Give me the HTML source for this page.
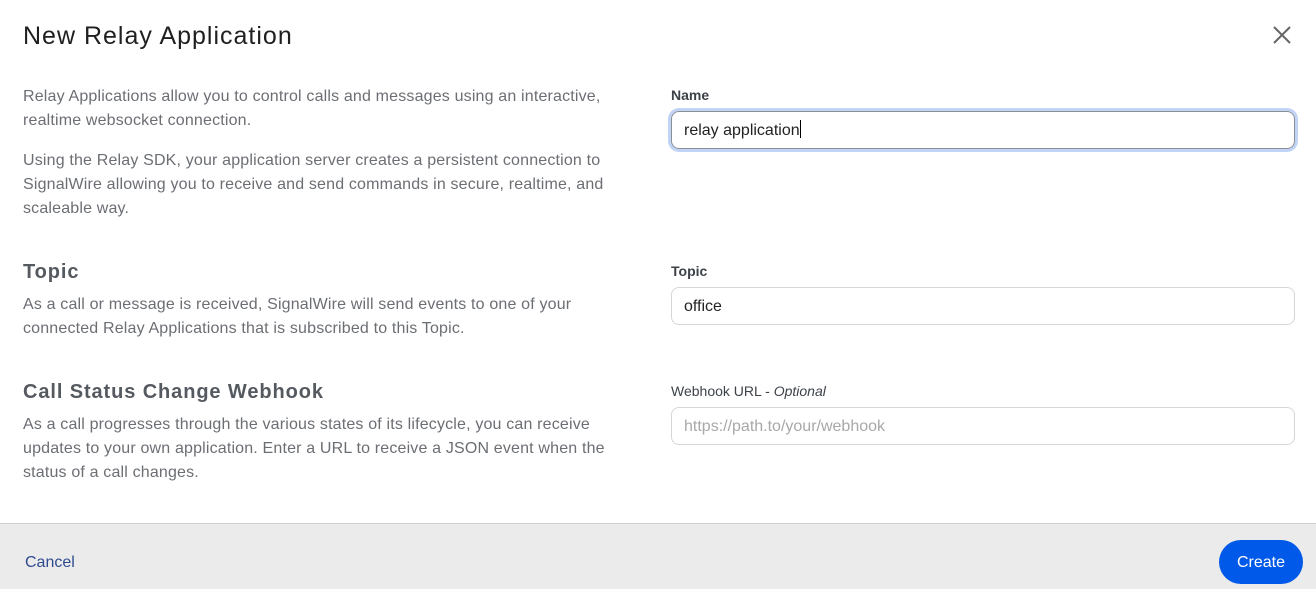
<!DOCTYPE html>
<html><head><meta charset="utf-8"><style>
*{margin:0;padding:0;box-sizing:border-box}
body{width:1316px;height:589px;background:#fff;font-family:"Liberation Sans",sans-serif;position:relative;overflow:hidden;color:#666}
.a{position:absolute}
.p{font-size:16px;line-height:24px;color:#6b6e73;letter-spacing:0.17px}
h1{position:absolute;left:23px;top:22px;font-size:25px;font-weight:400;color:#1f1f1f;letter-spacing:1px}
h2{position:absolute;left:23px;font-size:20px;font-weight:700;color:#555a60;letter-spacing:0.9px}
.lab{position:absolute;left:671px;font-size:14px;color:#3d4249}
.in{position:absolute;left:671px;width:624px;height:38px;border:1px solid #d6d6d6;border-radius:8px;font-size:16px;line-height:38px;padding-left:12px;color:#222}
</style></head><body>
<h1>New Relay Application</h1>
<svg class="a" style="left:1273px;top:26px" width="18" height="18" viewBox="0 0 18 18"><path d="M1 1L17 17M17 1L1 17" stroke="#666" stroke-width="2"/></svg>
<div class="a p" style="left:23px;top:85px;width:620px">Relay Applications allow you to control calls and messages using an interactive, realtime websocket connection.</div>
<div class="a p" style="left:23px;top:149px;width:620px">Using the Relay SDK, your application server creates a persistent connection to SignalWire allowing you to receive and send commands in secure, realtime, and scaleable way.</div>
<h2 style="top:261px">Topic</h2>
<div class="a p" style="left:23px;top:293px;width:620px">As a call or message is received, SignalWire will send events to one of your connected Relay Applications that is subscribed to this Topic.</div>
<h2 style="top:381px">Call Status Change Webhook</h2>
<div class="a p" style="left:23px;top:413px;width:600px">As a call progresses through the various states of its lifecycle, you can receive updates to your own application. Enter a URL to receive a JSON event when the status of a call changes.</div>
<div class="lab" style="top:87px;font-weight:700">Name</div>
<div class="in" style="top:111px;border-color:#8a8f98;box-shadow:0 0 0 3px #c2d4f6">relay application<span style="display:inline-block;width:1px;height:18px;background:#000;vertical-align:-3px"></span></div>
<div class="lab" style="top:263px;font-weight:700">Topic</div>
<div class="in" style="top:287px">office</div>
<div class="lab" style="top:383px">Webhook URL - <i>Optional</i></div>
<div class="in" style="top:407px;color:#a8a8a8">https://path.to/your/webhook</div>
<div class="a" style="left:0;top:523px;width:1316px;height:66px;background:#ebebeb;border-top:1px solid #cfcfcf"></div>
<div class="a" style="left:25px;top:554px;font-size:16px;color:#2f4b8f">Cancel</div>
<div class="a" style="left:1219px;top:540px;width:84px;height:44px;border-radius:22px;background:#0059e8;color:#fff;font-size:16px;line-height:46px;text-align:center">Create</div>
</body></html>
